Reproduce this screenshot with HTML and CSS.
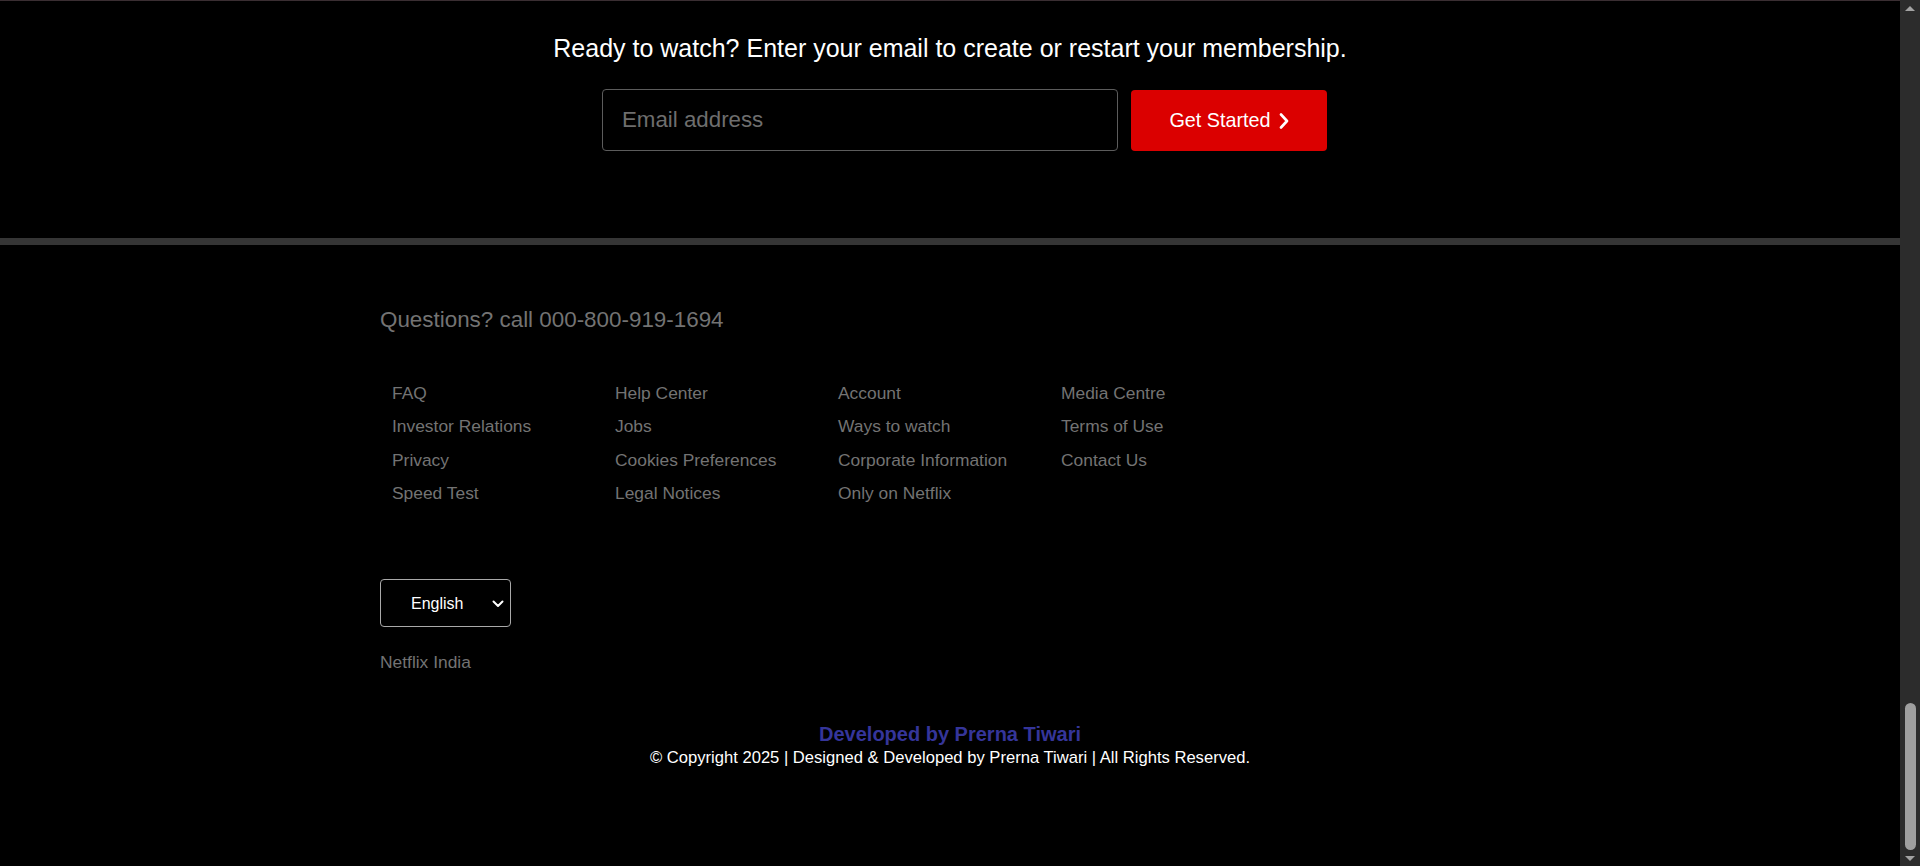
FILE: index.html
```html
<!DOCTYPE html>
<html lang="en">
<head>
<meta charset="utf-8">
<title>Netflix India – Footer</title>
<link rel="stylesheet" href="styles.css">
</head>
<body>
<main class="page">
  <section class="cta">
    <h3 class="cta-title">Ready to watch? Enter your email to create or restart your membership.</h3>
    <form class="cta-form">
      <input class="cta-input" type="email" placeholder="Email address">
      <button class="cta-btn" type="button">Get Started
        <svg class="cta-chev" width="10" height="16" viewBox="0 0 10 16"><path d="M2 1.5 L8 8 L2 14.5" fill="none" stroke="#fff" stroke-width="2.6" stroke-linecap="round" stroke-linejoin="round"/></svg>
      </button>
    </form>
  </section>
  <div class="divider"></div>
  <footer class="footer">
    <div class="footer-inner">
      <p class="questions">Questions? call 000-800-919-1694</p>
      <ul class="links">
        <li>FAQ</li>
        <li>Investor Relations</li>
        <li>Privacy</li>
        <li>Speed Test</li>
        <li>Help Center</li>
        <li>Jobs</li>
        <li>Cookies Preferences</li>
        <li>Legal Notices</li>
        <li>Account</li>
        <li>Ways to watch</li>
        <li>Corporate Information</li>
        <li>Only on Netflix</li>
        <li>Media Centre</li>
        <li>Terms of Use</li>
        <li>Contact Us</li>
      </ul>
      <div class="lang">
        <select class="lang-select"><option>English</option><option>हिन्दी</option></select>
        <svg class="lang-chev" width="12" height="8" viewBox="0 0 12 8"><path d="M1.5 1.5 L6 6 L10.5 1.5" fill="none" stroke="#fff" stroke-width="2" stroke-linecap="round" stroke-linejoin="round"/></svg>
      </div>
      <p class="country">Netflix India</p>
    </div>
    <div class="credits">
      <p class="dev">Developed by Prerna Tiwari</p>
      <p class="copy">© Copyright 2025 | Designed &amp; Developed by Prerna Tiwari | All Rights Reserved.</p>
    </div>
  </footer>
</main>
<div class="scrollbar" aria-hidden="true">
  <span class="sb-up"></span>
  <span class="sb-thumb"></span>
  <span class="sb-down"></span>
</div>
</body>
</html>
```
FILE: styles.css
```css
* { box-sizing: border-box; }
html { background: #000; }
body {
  margin: 0;
  background: #000;
  font-family: "Liberation Sans", Arial, sans-serif;
  color: #fff;
}
.page {
  margin-right: 20px;
}
.cta {
  border-top: 1px solid #3a2e32;
  padding: 33px 0 87px;
  text-align: center;
}
.cta-title {
  margin: 0;
  font-size: 25px;
  font-weight: 400;
  line-height: normal;
}
.cta-form {
  margin-top: 26px;
  display: flex;
  justify-content: center;
  align-items: center;
  gap: 13px;
  padding-left: 29px;
}
.cta-input {
  width: 516px;
  height: 62px;
  background: #000;
  border: 1px solid #5c5c5c;
  border-radius: 4px;
  padding: 0 19px;
  font-family: inherit;
  font-size: 22.3px;
  color: #fff;
}
.cta-input::placeholder { color: #6e6e6e; }
.cta-btn {
  width: 196px;
  height: 61px;
  background: #db0000;
  border: 0;
  border-radius: 4px;
  color: #fff;
  font-family: inherit;
  font-size: 19.8px;
  display: flex;
  align-items: center;
  justify-content: center;
  gap: 8px;
  padding: 0;
}
.cta-chev { display: block; margin-top: 1px; }
.divider {
  height: 7px;
  background: #353535;
}
.footer {
  padding-top: 62px;
  color: #737373;
}
.footer-inner {
  width: 60%;
  margin: 0 auto;
}
.questions {
  margin: 0;
  font-size: 22.4px;
  line-height: normal;
}
.links {
  list-style: none;
  margin: 44px 0 0;
  padding: 0 0 0 12px;
  display: grid;
  grid-template-columns: repeat(4, 223px);
  grid-template-rows: repeat(4, 33.3px);
  grid-auto-flow: column;
  font-size: 17.4px;
}
.links li { line-height: 33.3px; }
.lang {
  margin-top: 69px;
  width: 131px;
  height: 48px;
  border: 1px solid #a9a9a9;
  border-radius: 4px;
  display: flex;
  align-items: center;
  position: relative;
}
.lang-select {
  appearance: none;
  -webkit-appearance: none;
  background: transparent;
  border: 0;
  color: #fff;
  font-family: inherit;
  font-size: 16px;
  padding: 0 0 0 30px;
  width: 100%;
  height: 100%;
  outline: none;
}
.lang-chev {
  position: absolute;
  right: 6px;
  top: 20px;
}
.country {
  margin: 25px 0 0;
  font-size: 17.4px;
  line-height: normal;
}
.credits {
  margin-top: 50px;
  text-align: center;
}
.dev {
  margin: 0;
  color: #35359a;
  font-weight: 700;
  font-size: 20px;
  line-height: normal;
}
.copy {
  margin: 2px 0 0;
  color: #fff;
  font-size: 16.6px;
  line-height: normal;
}
.scrollbar {
  position: fixed;
  top: 0;
  right: 0;
  width: 20px;
  height: 100%;
  background: #2c2c2c;
  display: flex;
  flex-direction: column;
  align-items: center;
}
.sb-up,
.sb-down {
  width: 0;
  height: 0;
  border-left: 5px solid transparent;
  border-right: 5px solid transparent;
}
.sb-up {
  margin-top: 6px;
  border-bottom: 5px solid #a3a3a3;
}
.sb-thumb {
  margin-top: auto;
  width: 11px;
  height: 147px;
  border-radius: 6px;
  background: #9f9f9f;
}
.sb-down {
  margin: 6px 0 5px;
  border-top: 5px solid #a3a3a3;
}
```
